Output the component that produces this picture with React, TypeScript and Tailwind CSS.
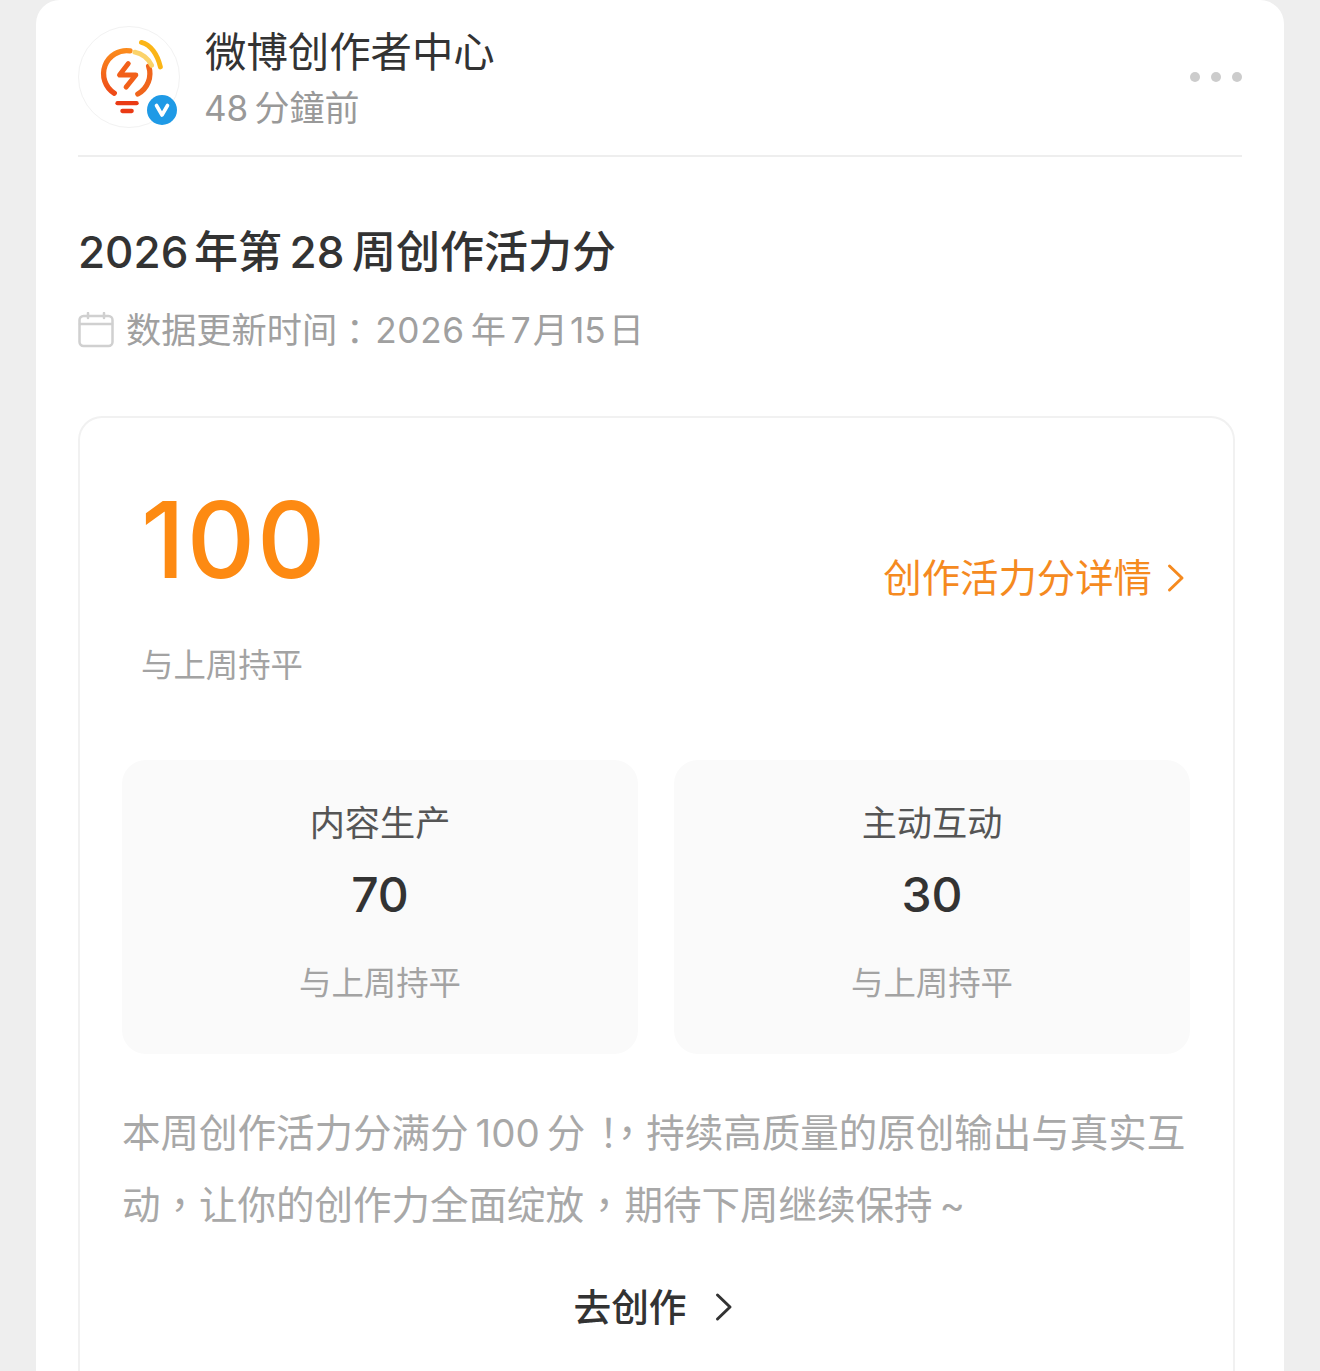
const font = "font-['Inter','Noto_Sans_CJK_SC',sans-serif]";
const tcFont = "font-['Noto_Sans_CJK_TC',sans-serif] leading-none";

const Chevron = ({ className, color }: { className?: string; color: string }) => (
  <svg viewBox="0 0 18 30" className={`h-[30px] w-[18px] ${className ?? ""}`} fill="none" stroke={color} strokeWidth="3" strokeLinecap="round" strokeLinejoin="round">
    <path d="M2.5 3 15 15 2.5 27" />
  </svg>
);

const Avatar = () => (
  <div className="relative h-[102px] w-[102px] shrink-0 rounded-full border border-[#f2f2f2] bg-white">
    <svg viewBox="0 0 102 102" className="h-full w-full" fill="none" strokeLinecap="round">
      <defs>
        <linearGradient id="bulb" x1="0" y1="0" x2="0" y2="1">
          <stop offset="0" stopColor="#fb8a1c" />
          <stop offset="1" stopColor="#ee4a18" />
        </linearGradient>
      </defs>
      <path d="M52 24.4A23.5 23.5 0 0 0 36 67.5" stroke="url(#bulb)" strokeWidth="5.4" />
      <path d="M60 68.3A23.5 23.5 0 0 0 71 40" stroke="#f0651c" strokeWidth="5.4" />
      <path d="M50.3 37.3 41.3 49H58L48 61.3" stroke="#f2601a" strokeWidth="5" strokeLinejoin="round" />
      <path d="M57 25.7C64 27 71 32 74 39" stroke="#fbd36a" strokeWidth="5" />
      <path d="M63.7 15.7C73 18 80 28 83 40.7" stroke="#fbb516" strokeWidth="5" />
      <path d="M39.3 77.7H58.7" stroke="#ea3a14" strokeWidth="4.4" />
      <path d="M44.3 85.7H53.7" stroke="#ea3a14" strokeWidth="4.4" />
    </svg>
    <div className="absolute left-[68px] top-[68px] flex h-[30px] w-[30px] items-center justify-center rounded-full bg-[#1f9ae6]">
      <svg viewBox="0 0 16 16" className="h-[16px] w-[16px]" fill="none" stroke="white" strokeWidth="3.6" strokeLinecap="round" strokeLinejoin="round">
        <path d="M2.5 3.5 8 13 13.5 3.5" />
      </svg>
    </div>
  </div>
);

const StatCard = ({ title, value }: { title: string; value: string }) => (
  <div className="flex h-[294px] flex-col items-center rounded-[24px] bg-[#fafafa] pt-[40px]">
    <div className="text-[35.2px] leading-[46px] text-[#555]">{title}</div>
    <div className="mt-[21px] text-[48px] font-medium leading-[56px] text-[#333]">{value}</div>
    <div className="mt-[40px] text-[32.4px] leading-[42px] text-[#a3a3a3]">与上周持平</div>
  </div>
);

export default function App() {
  return (
    <div className={`${font} h-[1371px] overflow-hidden bg-[#eeeeee] px-[36px]`}>
      <div className="h-full rounded-t-[24px] bg-white pl-[42px] pr-[42px]">
        <div className="flex h-[157px] items-start border-b-2 border-[#eeeeee] pt-[26px]">
          <Avatar />
          <div className="ml-[25px] flex-1">
            <div className="-mt-[1px] text-[41.4px] leading-[54px] text-[#333]">微博创作者中心</div>
            <div className="-ml-[1px] mt-[4px] text-[35px] leading-[50px] text-[#999]">48&#8201;分鐘前</div>
          </div>
          <div className="mt-[46px] flex gap-[11px]">
            <span className="h-[10px] w-[10px] rounded-full bg-[#cccccc]" />
            <span className="h-[10px] w-[10px] rounded-full bg-[#cccccc]" />
            <span className="h-[10px] w-[10px] rounded-full bg-[#cccccc]" />
          </div>
        </div>

        <h1 className="mt-[65px] text-[44px] font-medium leading-[60px] text-[#333]">
          2026&#8201;<span className="-ml-[2px]">年第</span>&#8201;28&#8201;周创作活力分
        </h1>

        <div className="mt-[23px] flex items-center text-[35.2px] leading-[50px] text-[#a0a0a0]">
          <svg viewBox="0 0 36 36" className="mr-[12px] h-[36px] w-[36px]" fill="none" stroke="#d0d0d0" strokeWidth="2.5" strokeLinecap="round">
            <rect x="1.5" y="4" width="33" height="30" rx="4" />
            <path d="M2 12H34M10 1V6M26 1V6" />
          </svg>
          数据更新时间<span className={tcFont}>：</span>
          <span className="ml-[3px] tracking-[0.6px]">2026</span>
          <span className="ml-[6px]">年</span>
          <span className="ml-[5px]">7</span>
          <span className="ml-[2px]">月</span>
          <span className="ml-[2px]">15</span>
          <span className="ml-[3px]">日</span>
        </div>

        <div className="mr-[7px] mt-[61px] h-[1000px] rounded-t-[24px] border-2 border-b-0 border-[#f1f1f1] pl-[42px] pr-[43px]">
          <div className="flex items-start justify-between pl-[19px] pr-[5px] pt-[57px]">
            <div>
              <div className="text-[106px] font-medium leading-[130px] tracking-[1.8px] text-[#fd8a12]">100</div>
              <div className="mt-[40px] text-[32.4px] leading-[42px] text-[#a3a3a3]">与上周持平</div>
            </div>
            <div className="mt-[78px] flex items-center text-[38.4px] leading-[50px] text-[#f58a1f]">
              创作活力分详情
              <Chevron className="ml-[15px]" color="#f58a1f" />
            </div>
          </div>

          <div className="mt-[73px] grid grid-cols-2 gap-[36px]">
            <StatCard title="内容生产" value="70" />
            <StatCard title="主动互动" value="30" />
          </div>

          <div className="mt-[43px] whitespace-nowrap text-[38.5px] leading-[72px] text-[#a8a8a8]">
            <p>
              本周创作活力分满分&#8201;100&#8201;分
              <span className={`${tcFont} ml-[4px] tracking-[-20px]`}>！</span>
              <span className={tcFont}>，</span>
              持续高质量的原创输出与真实互
            </p>
            <p>
              动<span className={tcFont}>，</span>让你的创作力全面绽放<span className={`${tcFont} ml-[1px] mr-[1px]`}>，</span>期待下周继续保持&#8201;~
            </p>
          </div>

          <div className="mt-[41px] flex items-center justify-center pr-[6px] text-[37.7px] font-medium leading-[50px] text-[#333]">
            去创作
            <Chevron className="ml-[28px]" color="#333333" />
          </div>
        </div>
      </div>
    </div>
  );
}
